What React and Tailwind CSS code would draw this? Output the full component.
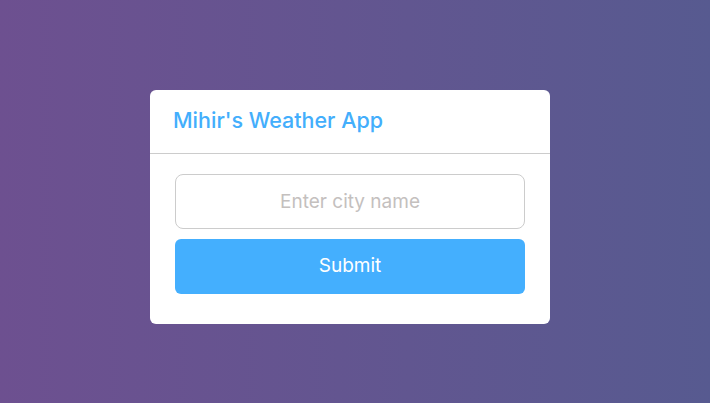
export default function App() {
  return (
    <div
      className="flex h-[403px] w-full items-center justify-center bg-gradient-to-r from-[#6d5090] to-[#575a90] pr-[10px] pt-[11px]"
      style={{ fontFamily: 'Inter, "Noto Sans", sans-serif' }}
    >
      <div className="w-[400px] rounded-[6px] bg-white pb-[30px]">
        <div className="flex h-[64px] items-center border-b border-[#cccccc] px-[23px] pb-[2px]">
          <h1 className="text-[21.5px] font-medium text-[#43aefc]">Mihir's Weather App</h1>
        </div>
        <form className="flex flex-col gap-[10px] px-[25px] pt-[20px]" onSubmit={(e) => e.preventDefault()}>
          <input
            type="text"
            placeholder="Enter city name"
            className="h-[55px] w-full rounded-[8px] border border-[#cccccc] text-center text-[19px] text-[#555] outline-none placeholder:text-[#c4c0be]"
          />
          <button
            type="submit"
            className="h-[55px] w-full rounded-[6px] bg-[#44affe] text-[19px] text-white"
          >
            Submit
          </button>
        </form>
      </div>
    </div>
  );
}
